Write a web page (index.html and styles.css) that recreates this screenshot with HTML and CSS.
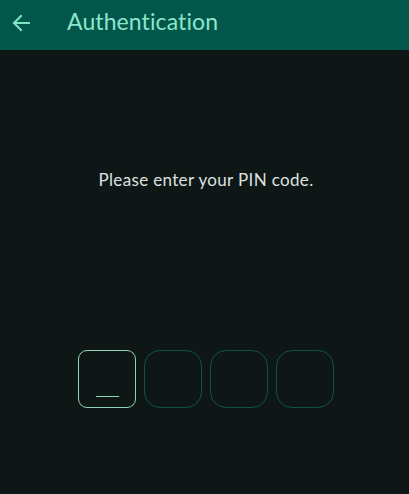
FILE: index.html
```html
<!DOCTYPE html>
<html>
<head>
<meta charset="utf-8">
<link rel="stylesheet" href="styles.css">
</head>
<body>
<header class="appbar">
  <svg class="back" width="20" height="20" viewBox="0 0 20 20"><path d="M18 10H3M10 3L3 10l7 7" fill="none" stroke="#7fe3c6" stroke-width="2" stroke-linecap="square"/></svg>
  <h1 class="title">Authentication</h1>
</header>
<main class="content">
  <p class="prompt">Please enter your PIN code.</p>
  <div class="pins">
    <div class="pin active"><span class="cursor"></span></div>
    <div class="pin"></div>
    <div class="pin"></div>
    <div class="pin"></div>
  </div>
</main>
</body>
</html>
```
FILE: styles.css
```css
html, body { margin: 0; padding: 0; }
body {
  background: #0f1716;
  font-family: Lato, "Noto Sans", sans-serif;
  font-variant-ligatures: none;
  width: 409px;
  height: 494px;
  overflow: hidden;
}
.appbar {
  height: 50px;
  background: #02574a;
  display: flex;
  align-items: center;
  padding-left: 11px;
  box-sizing: border-box;
}
.back { display: block; margin-top: -4px; }
.title {
  margin: -9px 0 0 36px;
  font-size: 23px;
  font-weight: 400;
  color: #8ce6cb;
  letter-spacing: 0.1px;
}
.content {
  display: flex;
  flex-direction: column;
  align-items: center;
}
.prompt {
  margin: 119px 0 0 0;
  font-size: 17px;
  color: #dde1e0;
  letter-spacing: 0.35px;
  line-height: 21px;
  padding-left: 3px;
}
.pins {
  display: flex;
  gap: 8px;
  margin-top: 160px;
  padding-left: 3px;
}
.pin {
  width: 56px;
  height: 56px;
  border: 1px solid #0e5247;
  border-radius: 16px;
  display: flex;
  justify-content: center;
  align-items: flex-end;
}
.pin.active {
  border-color: #8fd3b9;
  border-radius: 9px;
}
.cursor {
  width: 23px;
  height: 1px;
  background: #8fd3b9;
  margin-bottom: 10px;
}
```
